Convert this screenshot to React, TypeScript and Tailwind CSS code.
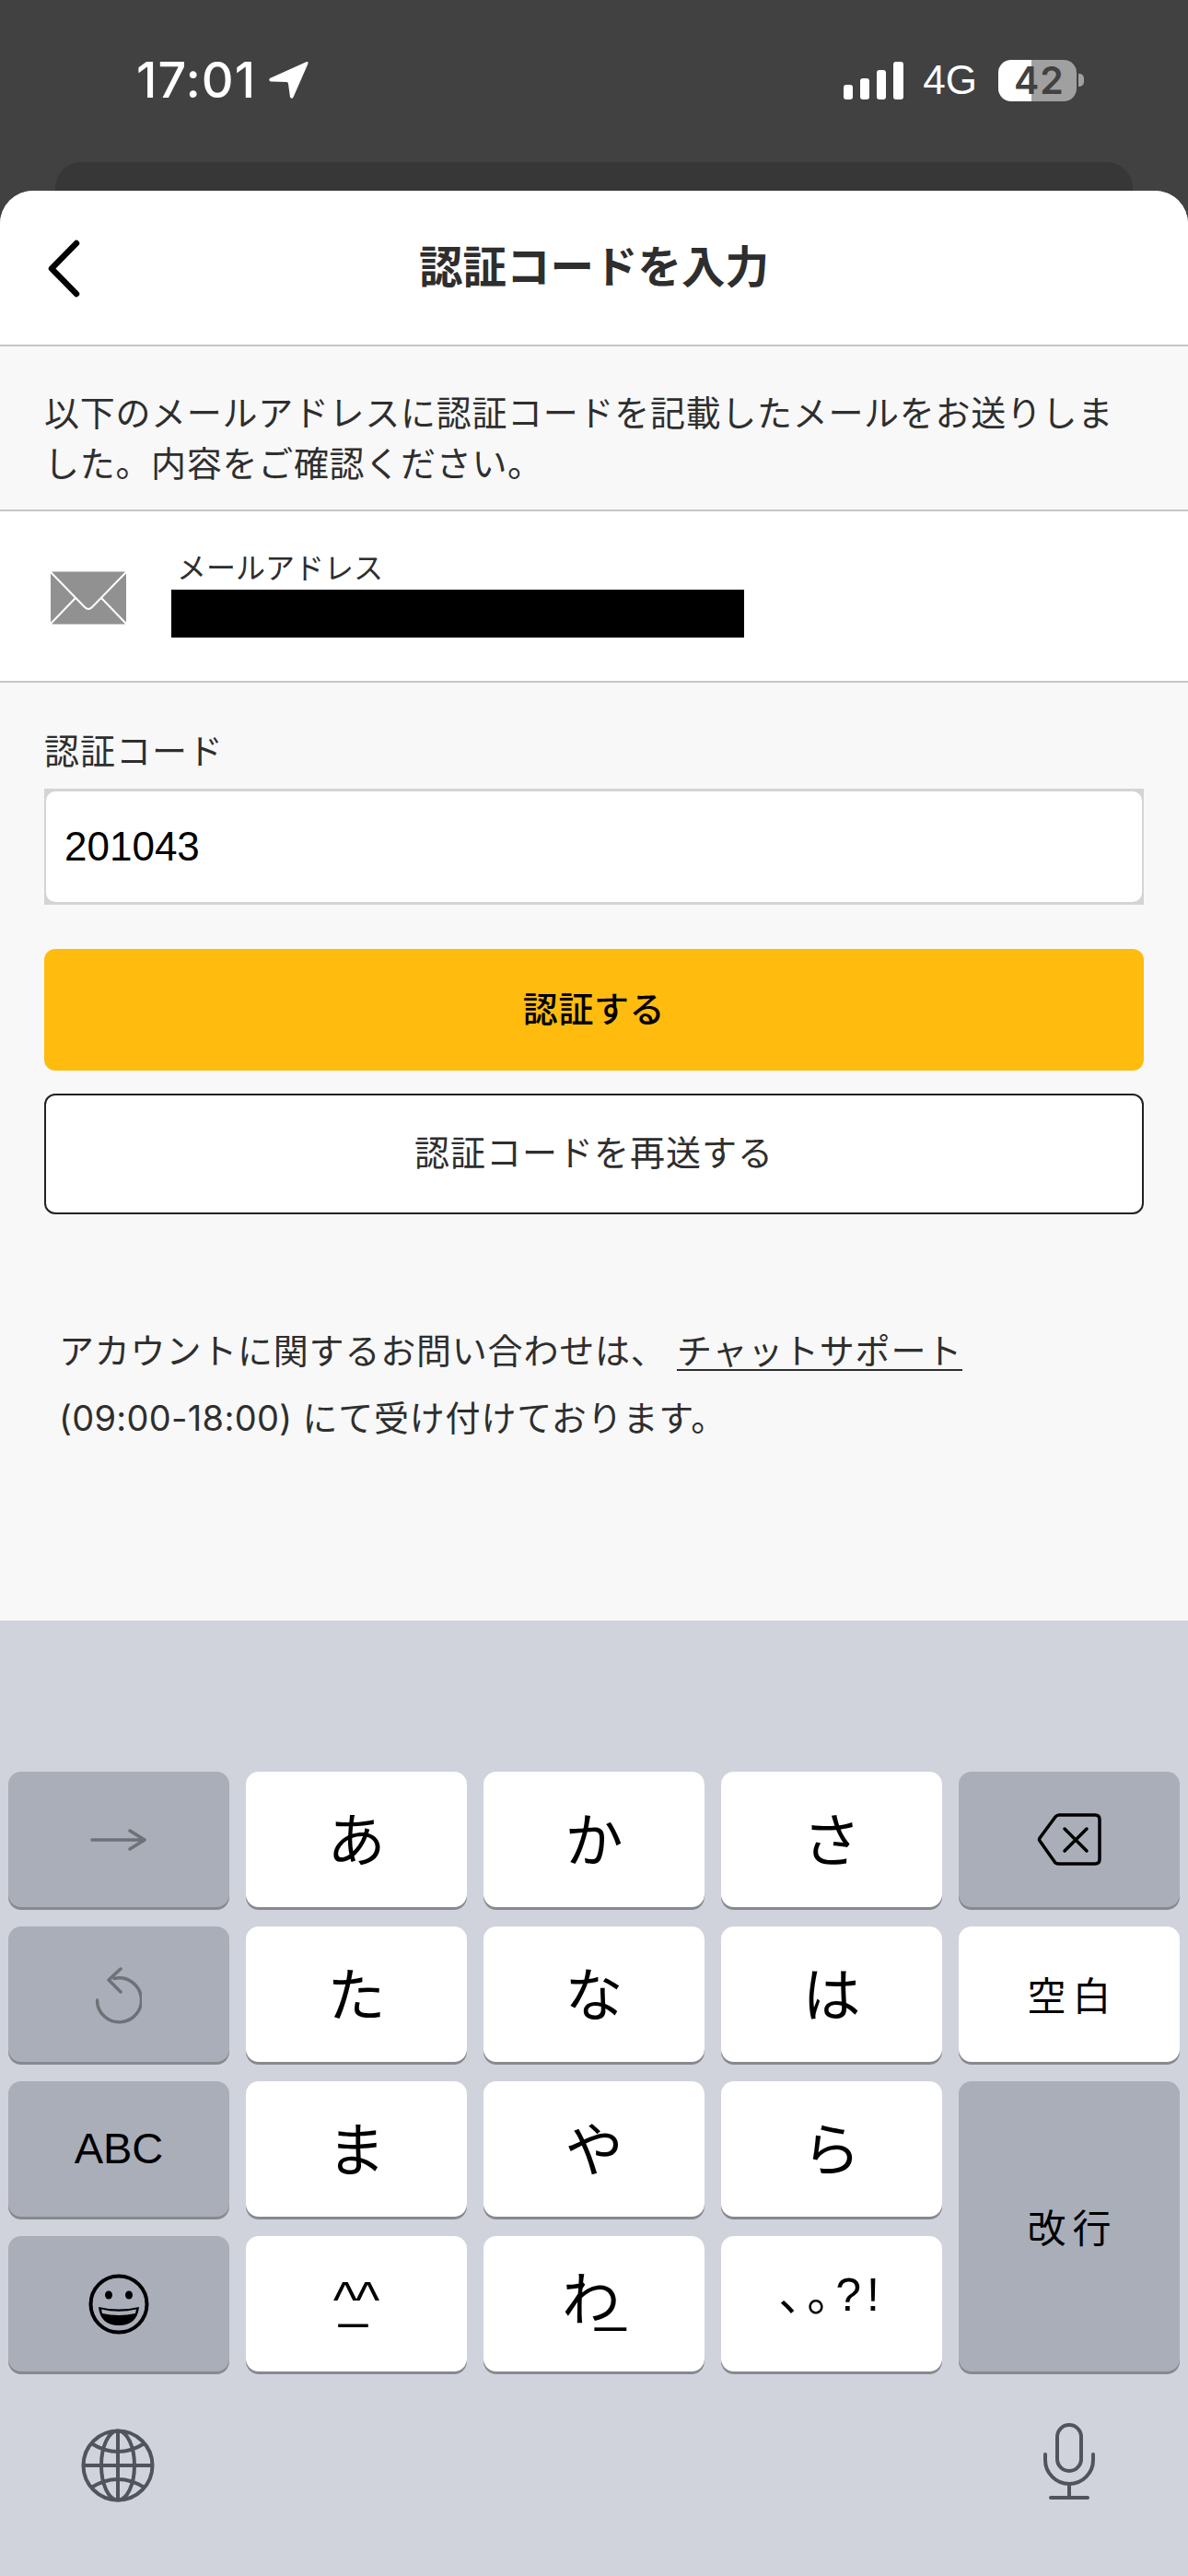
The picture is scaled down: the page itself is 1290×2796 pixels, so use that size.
import type { ReactNode } from "react";

const jpFont = "font-['Liberation_Sans','Noto_Sans_CJK_JP',sans-serif]";
const cjkFont = "font-['Noto_Sans_CJK_JP',sans-serif]";

const keyBase =
  "flex items-center justify-center rounded-[14px] shadow-[0_3px_0_#87898e] text-black";
const lightKey = keyBase + " bg-white";
const darkKey = keyBase + " bg-[#a9aeb9]";
const kanaStyle = "text-[63px] leading-none pb-[8px] " + cjkFont;

const Kana = ({ children }: { children: ReactNode }) => (
  <div className={lightKey}>
    <span className={kanaStyle}>{children}</span>
  </div>
);

const StatusBar = () => (
  <div className="flex items-center justify-between h-[64px] pl-[148px] pr-[113px]">
    <div className="flex items-center gap-[13px]">
      <span className="font-['Inter',sans-serif] text-[54px] font-medium leading-none tracking-[1px] text-white">
        17:01
      </span>
      <svg width="44" height="42" viewBox="0 0 44 42">
        <path
          d="M42 1 L2 19 Q0 21 3 22.5 L20 23 Q22 23 22 25 L24 39.5 Q26 42 27.5 39.5 L43.5 3 Q44 0.5 42 1Z"
          fill="#ffffff"
        />
      </svg>
    </div>
    <div className="flex items-center">
      <div className="flex items-end gap-[8px] h-[41px]">
        <div className="w-[10px] h-[16px] rounded-[3px] bg-white" />
        <div className="w-[10px] h-[23px] rounded-[3px] bg-white" />
        <div className="w-[10px] h-[32px] rounded-[3px] bg-white" />
        <div className="w-[11px] h-[41px] rounded-[3px] bg-white" />
      </div>
      <span className="ml-[21px] font-['Liberation_Sans',sans-serif] text-[44px] leading-none text-white">
        4G
      </span>
      <div className="relative ml-[23px] flex h-[45px] w-[85px] overflow-hidden rounded-[14px]">
        <div className="w-[36px] bg-white" />
        <div className="flex-1 bg-[#a0a0a0]" />
        <span className="absolute inset-0 flex items-center justify-center pl-[4px] font-['Inter',sans-serif] text-[41px] font-semibold leading-none tracking-[1px] text-[#414141]">
          42
        </span>
      </div>
      <div className="ml-[2px] h-[14px] w-[6px] rounded-r-[5px] bg-[#a0a0a0]" />
    </div>
  </div>
);

const BackChevron = () => (
  <svg width="40" height="68" viewBox="0 0 40 68" fill="none">
    <path
      d="M35 7 L8 34.5 L35 62"
      stroke="#000000"
      strokeWidth="6.5"
      strokeLinecap="round"
      strokeLinejoin="round"
    />
  </svg>
);

const Envelope = () => (
  <svg className="mt-[4px]" width="84" height="58" viewBox="0 0 84 58">
    <rect x="1" y="0.5" width="82" height="57" rx="2" fill="#919191" />
    <path
      d="M1 1 L38 39 Q42 43 46 39 L83 1 M1 57 L28 29 M83 57 L56 29"
      stroke="#ffffff"
      strokeWidth="2"
      fill="none"
    />
  </svg>
);

const ArrowIcon = () => (
  <svg width="62" height="24" viewBox="0 0 62 24" fill="none">
    <path
      d="M2 12 H58 M43 2 L59 12 L43 22"
      stroke="#6e7177"
      strokeWidth="3.5"
      strokeLinecap="round"
      strokeLinejoin="round"
    />
  </svg>
);

const UndoIcon = () => (
  <svg className="mt-[3px]" width="50" height="62" viewBox="0 0 50 62" fill="none">
    <path
      d="M1.5 36 A24 24 0 1 0 20 12.5 M27 2 L14 14 L27 27"
      stroke="#6e7177"
      strokeWidth="3.5"
      strokeLinecap="round"
      strokeLinejoin="round"
    />
  </svg>
);

const DeleteIcon = () => (
  <svg width="70" height="58" viewBox="0 0 70 58" fill="none">
    <path
      d="M24 2 H63 Q68 2 68 7 V50 Q68 55 63 55 H24 Q22 55 20 54 L3 30 Q2 28.5 3 27 L20 4 Q22 2 24 2Z"
      stroke="#000000"
      strokeWidth="3.5"
      strokeLinejoin="round"
    />
    <path d="M30 17 L54 41 M54 17 L30 41" stroke="#000000" strokeWidth="3.5" strokeLinecap="round" />
  </svg>
);

const SmileIcon = () => (
  <svg width="66" height="66" viewBox="0 0 66 66" fill="none">
    <circle cx="33" cy="33" r="30.5" stroke="#000000" strokeWidth="4" />
    <ellipse cx="22" cy="23" rx="4" ry="4.5" fill="#000000" />
    <ellipse cx="44" cy="23" rx="4" ry="4.5" fill="#000000" />
    <path d="M11 36 Q33 41 55 36 Q53 56 33 56 Q13 56 11 36Z" fill="#000000" />
    <path d="M14 38.5 Q33 43 52 38.5 L51 43 Q33 47 15 43Z" fill="#a9aeb9" />
  </svg>
);

const GlobeIcon = () => (
  <svg className="mt-[6px]" width="80" height="80" viewBox="0 0 80 80" fill="none" stroke="#50545d" strokeWidth="4">
    <circle cx="40" cy="40" r="37.5" />
    <ellipse cx="40" cy="40" rx="18" ry="37.5" />
    <path d="M40 2.5 V77.5 M2.5 40 H77.5" />
    <path d="M11 16 Q40 34 69 16 M11 64 Q40 46 69 64" />
  </svg>
);

const MicIcon = () => (
  <svg width="58" height="84" viewBox="0 0 58 84" fill="none" stroke="#50545d" strokeWidth="4" strokeLinecap="round">
    <rect x="16" y="2" width="26" height="50" rx="13" />
    <path d="M3 34 V40 A26 26 0 0 0 55 40 V34" />
    <path d="M29 66 V81 M9 81 H49" />
  </svg>
);

const Keyboard = () => (
  <div className="h-[1037px] bg-[#d0d3dc] pt-[164px] px-[9px]">
    <div className="grid grid-cols-[repeat(5,240px)] grid-rows-[repeat(4,147px)] gap-x-[18px] gap-y-[21px]">
      <div className={darkKey}>
        <ArrowIcon />
      </div>
      <Kana>あ</Kana>
      <Kana>か</Kana>
      <Kana>さ</Kana>
      <div className={darkKey}>
        <DeleteIcon />
      </div>

      <div className={darkKey}>
        <UndoIcon />
      </div>
      <Kana>た</Kana>
      <Kana>な</Kana>
      <Kana>は</Kana>
      <div className={lightKey}>
        <span className={"text-[42px] leading-none tracking-[7px] pl-[7px] pb-[2px] " + cjkFont}>空白</span>
      </div>

      <div className={darkKey + " font-['Liberation_Sans',sans-serif] text-[47px]"}>ABC</div>
      <Kana>ま</Kana>
      <Kana>や</Kana>
      <Kana>ら</Kana>
      <div className={darkKey + " row-span-2"}>
        <span className={"text-[42px] leading-none tracking-[7px] pl-[7px] pb-[2px] " + cjkFont}>改行</span>
      </div>

      <div className={darkKey}>
        <SmileIcon />
      </div>
      <div className={lightKey}>
        <span className="font-['Liberation_Sans',sans-serif] text-[56px] leading-none pb-[10px]">
          ^<span className="-ml-[20px]">_</span>
          <span className="-ml-[13px]">^</span>
        </span>
      </div>
      <div className={lightKey}>
        <span className="font-['Liberation_Sans','Noto_Sans_CJK_JP',sans-serif] text-[63px] leading-none pb-[8px]">
          わ<span className="-ml-[27px] text-[60px]">_</span>
        </span>
      </div>
      <div className={lightKey}>
        <span className="font-['Liberation_Sans','Noto_Sans_CJK_JP',sans-serif] text-[50px] leading-none pb-[20px] tracking-[6px]">
          、。<span className="-ml-[25px]">?!</span>
        </span>
      </div>
    </div>
    <div className="flex items-start justify-between pl-[79px] pr-[91px] pt-[56px]">
      <GlobeIcon />
      <MicIcon />
    </div>
  </div>
);

export default function App() {
  return (
    <div className={"flex h-[2796px] w-[1290px] flex-col overflow-hidden bg-[#414141] " + jpFont}>
      <div className="flex h-[207px] flex-col pt-[55px]">
        <StatusBar />
        <div className="mx-[60px] mt-[57px] flex-1 rounded-t-[28px] bg-[#373737]" />
      </div>

      <div className="flex flex-1 flex-col overflow-hidden rounded-t-[36px] bg-[#f8f8f8]">
        <div className="grid h-[169px] grid-cols-[1fr_auto_1fr] items-center border-b-2 border-[#c6c6c6] bg-white pl-[48px]">
          <BackChevron />
          <h1 className="pr-[48px] text-[47.5px] font-bold leading-none text-[#2e2e2e]">認証コードを入力</h1>
          <div />
        </div>

        <p className="px-[48px] pb-[21px] pt-[46px] text-[38px] leading-[55px] tracking-[0.7px] text-[#2e2e2e]">
          以下のメールアドレスに認証コードを記載したメールをお送りしました。内容をご確認ください。
        </p>

        <div className="flex h-[188px] items-center border-y-2 border-[#c6c6c6] bg-white pl-[54px]">
          <Envelope />
          <div className="mb-[4px] ml-[48px] flex flex-col">
            <span className="pl-[6px] text-[32px] leading-[38px] text-[#2e2e2e]">メールアドレス</span>
            <div className="mt-[4px] h-[52px] w-[622px] bg-black" />
          </div>
        </div>

        <div className="flex flex-1 flex-col px-[48px] pt-[53px]">
          <label className="text-[38px] leading-[44px] tracking-[1px] text-[#2e2e2e]">認証コード</label>
          <div className="mt-[18px] h-[126px] bg-[#d4d4d4] px-[2px] py-[3px]">
            <div className="flex h-full items-center rounded-[10px] bg-white pl-[20px] text-[44px] text-black">
              201043
            </div>
          </div>

          <button className="mt-[48px] h-[132px] rounded-[12px] bg-[#ffbb0e] text-[38px] font-medium tracking-[0.6px] text-black">
            認証する
          </button>
          <button className="mt-[25px] h-[131px] rounded-[12px] border-2 border-[#222222] bg-white text-[38px] tracking-[1px] text-[#2e2e2e]">
            認証コードを再送する
          </button>

          <p className="mt-[113px] px-[16px] text-[38px] leading-[72px] tracking-[0.8px] text-[#2e2e2e]">
            アカウントに関するお問い合わせは、 <span className="underline decoration-[2px] underline-offset-[6px]">チャットサポート</span>
            <br />
            <span className="font-['Inter',sans-serif] tracking-[0.3px]">(09:00-18:00) </span>にて受け付けております。
          </p>
        </div>

        <Keyboard />
      </div>
    </div>
  );
}
